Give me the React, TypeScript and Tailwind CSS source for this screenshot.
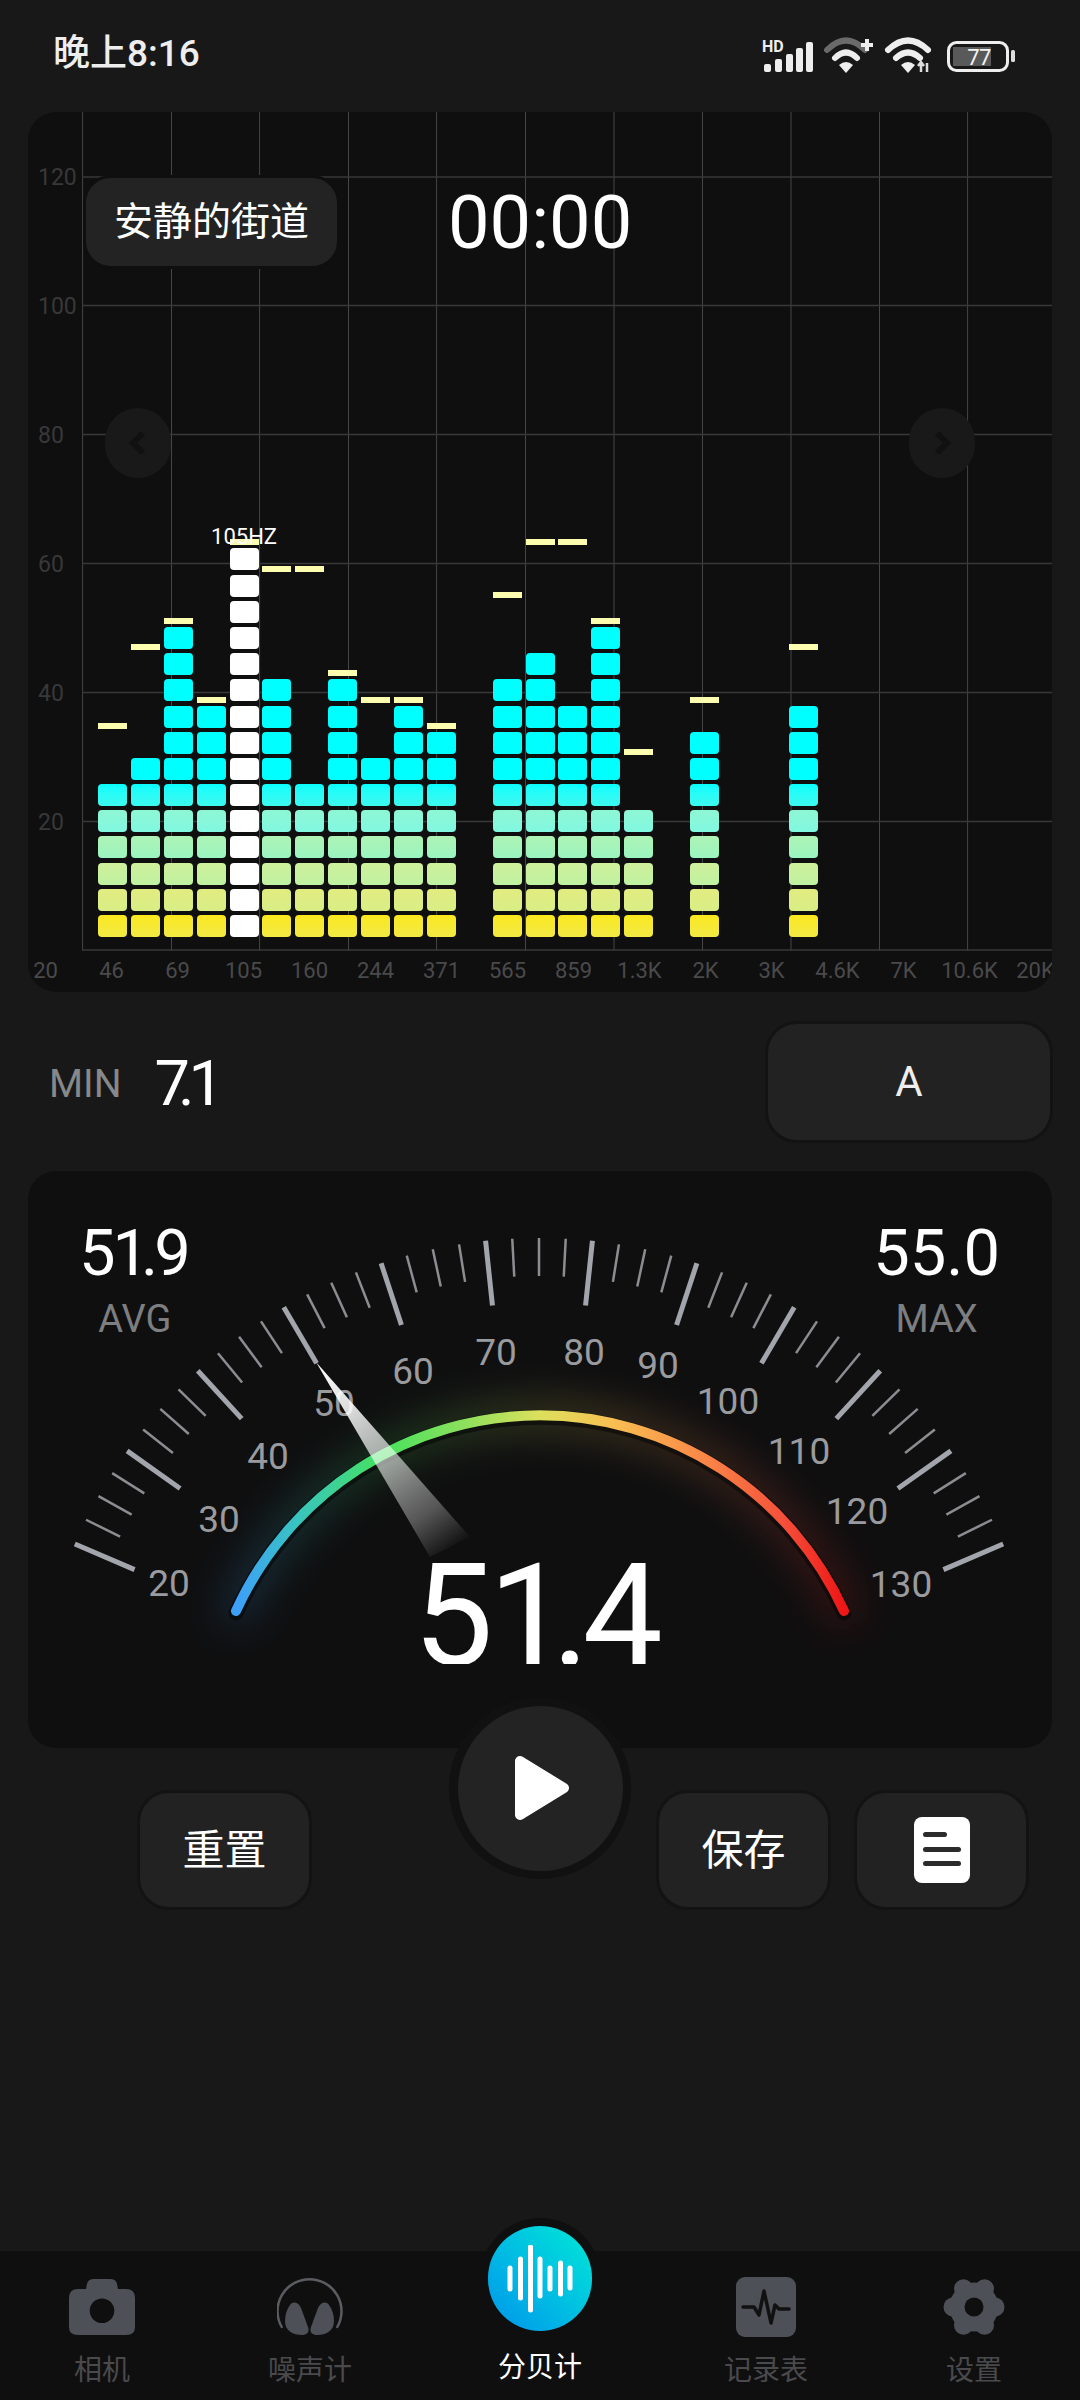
import React from "react";

const FONT = "font-['Roboto','Noto_Sans_CJK_SC',sans-serif]";

const ROW_CLASSES = [
  "bg-linear-to-b from-[#fbe91a] to-[#f2e944]",
  "bg-linear-to-b from-[#e2ec80] to-[#d8ee86]",
  "bg-linear-to-b from-[#cff09a] to-[#bff2a2]",
  "bg-linear-to-b from-[#aef3b4] to-[#9af5c0]",
  "bg-linear-to-b from-[#8ef7d4] to-[#80f8e0]",
  "bg-linear-to-b from-[#04fefe] to-[#3cf9ee]",
  "bg-[#00ffff]",
];

const bars: { n: number; peak: number | null; white?: boolean }[] = [
  { n: 6, peak: 726 },
  { n: 7, peak: 647 },
  { n: 12, peak: 621 },
  { n: 9, peak: 700 },
  { n: 15, peak: 542, white: true },
  { n: 10, peak: 569 },
  { n: 6, peak: 569 },
  { n: 10, peak: 673 },
  { n: 7, peak: 700 },
  { n: 9, peak: 700 },
  { n: 8, peak: 726 },
  { n: 0, peak: null },
  { n: 10, peak: 595 },
  { n: 11, peak: 542 },
  { n: 9, peak: 542 },
  { n: 12, peak: 621 },
  { n: 5, peak: 752 },
  { n: 0, peak: null },
  { n: 8, peak: 700 },
  { n: 0, peak: null },
  { n: 0, peak: null },
  { n: 9, peak: 647 },
];

const xLabels = ["20", "46", "69", "105", "160", "244", "371", "565", "859", "1.3K", "2K", "3K", "4.6K", "7K", "10.6K", "20K"];

function StatusIcons() {
  return (
    <svg width="262" height="42" viewBox="755 34 262 42" className="shrink-0">
      <text x="762" y="51" fontFamily="Roboto" fontWeight="700" fontSize="16" fill="#eee">HD</text>
      <g fill="#eee">
        <rect x="764" y="63" width="7" height="8" rx="2" />
        <rect x="775" y="58" width="7" height="13" rx="2" />
        <rect x="786" y="53" width="7" height="18" rx="2" />
        <rect x="796" y="47" width="7" height="24" rx="2" />
        <rect x="806" y="41" width="7" height="30" rx="2" />
      </g>
      <g fill="none" strokeLinecap="round" strokeWidth="6">
        <path d="M827 49 Q846 30 865 49" stroke="#6a6a6a" />
        <path d="M835 57 Q846 46 857 57" stroke="#eee" />
      </g>
      <path d="M839 64 Q846 58 853 64 L846 72 Z" fill="#eee" />
      <path d="M861 44 H873 M867 38 V50" stroke="#eee" strokeWidth="4" />
      <g fill="none" strokeLinecap="round" strokeWidth="6" stroke="#eee">
        <path d="M888 49 Q908 30 928 49" />
        <path d="M896 57 Q908 46 920 57" />
      </g>
      <path d="M901 64 Q908 58 915 64 L908 72 Z" fill="#eee" />
      <path d="M921 62 V71 M918 65 L921 61 L924 65 M927 62 V71" stroke="#ddd" strokeWidth="2.5" fill="none" />
      <rect x="948.5" y="41.5" width="59" height="28" rx="8" fill="none" stroke="#eee" strokeWidth="3" />
      <rect x="953" y="46" width="38" height="19" fill="#595959" />
      <text x="979" y="63.5" textAnchor="middle" fontFamily="Roboto" fontSize="22" fill="#f2f2f2" style={{ letterSpacing: "-0.5px" }}>77</text>
      <rect x="1011" y="49" width="4" height="12" rx="1.5" fill="#ddd" />
    </svg>
  );
}

function ChartGrid() {
  const vs = [82.6, 171.5, 259.6, 348.5, 436.6, 525.5, 614, 702.5, 791, 879.5, 967.6];
  const hs: [number, string][] = [[177, "120"], [305.5, "100"], [434.5, "80"], [563.5, "60"], [692.5, "40"], [821.5, "20"]];
  return (
    <svg className="absolute inset-0 w-full h-full" viewBox="28 112 1024 839">
      {vs.map((x) => (
        <line key={x} x1={x} x2={x} y1="112" y2="951" stroke="#464647" strokeWidth="1" />
      ))}
      {hs.map(([y, t]) => (
        <g key={t}>
          <line x1="82" x2="1052" y1={y} y2={y} stroke="#383839" strokeWidth="1.5" />
          <text x="38" y={y + 8} fontFamily="Roboto" fontSize="23" fill="#383839">{t}</text>
        </g>
      ))}
      <line x1="82" x2="1052" y1="950" y2="950" stroke="#383839" strokeWidth="1.5" />
    </svg>
  );
}

function ChartPanel() {
  return (
    <div className="relative mx-[28px] h-[880px] rounded-[28px] bg-[#0f0f10] overflow-hidden flex flex-col shrink-0">
      <div className="relative h-[839px] shrink-0">
        <ChartGrid />
        <div className="relative flex h-full gap-[3.9px] pl-[70px]">
          {bars.map((b, i) => (
            <div key={i} className="relative w-[29px] h-full flex flex-col-reverse gap-[4.2px] pb-[14px]">
              {Array.from({ length: b.n }).map((_, r) => (
                <div
                  key={r}
                  className={`h-[22px] rounded-[4px] shrink-0 ${b.white ? "bg-white" : ROW_CLASSES[Math.min(r, 6)]}`}
                />
              ))}
              {b.peak !== null && (
                <div className="absolute left-0 w-[29px] h-[6px] bg-[#fdfdb0]" style={{ top: b.peak - 112 - 3 }} />
              )}
              {b.white && (
                <div className="absolute top-[414px] left-1/2 -translate-x-1/2 text-[22px] leading-[22px] text-white whitespace-nowrap">
                  105HZ
                </div>
              )}
            </div>
          ))}
        </div>
        <div className="absolute left-[55px] top-[63px] w-[257px] h-[94px] rounded-[28px] border-[3px] border-[#0f0f10] bg-[#232323] flex items-center justify-center text-white text-[39px]">
          安静的街道
        </div>
        <div className="absolute left-[420px] top-[66px] text-[74px] leading-[90px] font-normal text-white">00:00</div>
        <div className="absolute left-[77px] top-[296px] w-[66px] h-[70px] rounded-full bg-[#191919] flex items-center justify-center">
          <svg width="24" height="30" viewBox="0 0 24 30"><path d="M17 5 L7 15 L17 25" fill="none" stroke="#111112" strokeWidth="6" /></svg>
        </div>
        <div className="absolute left-[881px] top-[296px] w-[66px] h-[70px] rounded-full bg-[#191919] flex items-center justify-center">
          <svg width="24" height="30" viewBox="0 0 24 30"><path d="M7 5 L17 15 L7 25" fill="none" stroke="#111112" strokeWidth="6" /></svg>
        </div>
      </div>
      <div className="flex -ml-[15.5px] shrink-0">
        {xLabels.map((t) => (
          <div key={t} className="w-[66px] h-[38px] shrink-0 flex items-center justify-center text-[22px] text-[#4a4a4b] whitespace-nowrap">
            {t}
          </div>
        ))}
      </div>
    </div>
  );
}

function MinRow() {
  return (
    <div className="h-[179px] shrink-0 flex items-center pl-[49px] pr-[27px]">
      <span className="mt-[4px] text-[39px] leading-[48px] text-[#86888a]">MIN</span>
      <span className="ml-[33px] mt-[4px] text-[63px] leading-[70px] text-white flex">
        <span>7</span>
        <span className="-ml-[12px]">.</span>
        <span className="-ml-[6px]">1</span>
      </span>
      <div className="ml-auto w-[288px] h-[122px] rounded-[32px] bg-[#222223] border-[3px] border-[#131313] flex items-center justify-center text-[42px] text-[#eee]">
        A
      </div>
    </div>
  );
}

function Gauge() {
  const cx = 539;
  const cy = 1743;
  const ticks = Array.from({ length: 45 }).map((_, i) => {
    const a = ((23.2 + (i * 133.6) / 44) * Math.PI) / 180;
    const major = i % 4 === 0;
    const ri = major ? 440 : 467;
    const ro = 505;
    return {
      i,
      major,
      x1: cx - ro * Math.cos(a),
      y1: cy - ro * Math.sin(a),
      x2: cx - ri * Math.cos(a),
      y2: cy - ri * Math.sin(a),
    };
  });
  const labels: [string, number, number][] = [
    ["20", 169, 1583], ["30", 219, 1519], ["40", 268, 1456], ["50", 334, 1403], ["60", 413, 1371], ["70", 496, 1352],
    ["80", 584, 1352], ["90", 658, 1365], ["100", 728, 1401], ["110", 799, 1451], ["120", 857, 1511], ["130", 901, 1584],
  ];
  const arc = "M236 1611 A334 334 0 0 1 844 1611";
  return (
    <svg className="absolute inset-0 w-full h-full" viewBox="28 1171 1024 577">
      <defs>
        <linearGradient id="arcG" gradientUnits="userSpaceOnUse" x1="236" y1="0" x2="844" y2="0">
          <stop offset="0" stopColor="#3d9ffa" />
          <stop offset="0.1" stopColor="#38c4c0" />
          <stop offset="0.24" stopColor="#45e25e" />
          <stop offset="0.38" stopColor="#90e05c" />
          <stop offset="0.5" stopColor="#dde05c" />
          <stop offset="0.62" stopColor="#f8bf52" />
          <stop offset="0.76" stopColor="#fa8a48" />
          <stop offset="0.9" stopColor="#f5503a" />
          <stop offset="1" stopColor="#ee1616" />
        </linearGradient>
        <linearGradient id="needleG" gradientUnits="userSpaceOnUse" x1="316" y1="1362" x2="452" y2="1552">
          <stop offset="0" stopColor="#fff" stopOpacity="1" />
          <stop offset="0.25" stopColor="#fff" stopOpacity="0.85" />
          <stop offset="0.5" stopColor="#fff" stopOpacity="0.6" />
          <stop offset="0.8" stopColor="#fff" stopOpacity="0.3" />
          <stop offset="1" stopColor="#fff" stopOpacity="0" />
        </linearGradient>
        <filter id="glow" x="-20%" y="-30%" width="140%" height="170%">
          <feGaussianBlur stdDeviation="20" />
        </filter>
        <clipPath id="bigClip">
          <rect x="380" y="1500" width="320" height="164" />
        </clipPath>
      </defs>
      {ticks.map((t) => (
        <line
          key={t.i}
          x1={t.x1}
          y1={t.y1}
          x2={t.x2}
          y2={t.y2}
          stroke={t.major ? "#a2a5ab" : "#8b8d91"}
          strokeWidth={t.major ? 5 : 2.5}
        />
      ))}
      {labels.map(([t, x, y]) => (
        <text key={t} x={x} y={y + 13} textAnchor="middle" fontFamily="Roboto" fontSize="37" fill="#9a9b9e">{t}</text>
      ))}
      <path d={arc} fill="none" stroke="url(#arcG)" strokeWidth="28" strokeLinecap="round" opacity="0.22" filter="url(#glow)" />
      <path d={arc} fill="none" stroke="#070707" strokeWidth="15" strokeLinecap="round" opacity="0.6" transform="translate(0 2)" />
      <path d={arc} fill="none" stroke="url(#arcG)" strokeWidth="10" strokeLinecap="round" />
      <polygon points="316,1362 430,1557 470,1537" fill="url(#needleG)" />
      <text x="413" y="1665" clipPath="url(#bigClip)" fontFamily="Roboto" fontSize="143" fill="#fff">
        5<tspan dx="-5">1</tspan><tspan dx="-17">.</tspan><tspan dx="-7">4</tspan>
      </text>
    </svg>
  );
}

function GaugePanel() {
  return (
    <div className="relative mx-[28px] h-[577px] shrink-0 rounded-[28px] bg-[#0f0f10] overflow-hidden">
      <Gauge />
      <div className="relative flex justify-between pl-[51px] pr-[52px] pt-[50px]">
        <div className="flex flex-col items-center">
          <div className="text-[65px] leading-[64px] text-white flex">
            <span>5</span>
            <span className="-ml-[3px]">1</span>
            <span className="-ml-[8px]">.</span>
            <span className="-ml-[4px]">9</span>
          </div>
          <div className="mt-[15px] text-[38px] leading-[38px] text-[#7d7e80]">AVG</div>
        </div>
        <div className="flex flex-col items-center">
          <div className="text-[65px] leading-[64px] text-white">55.0</div>
          <div className="mt-[15px] text-[38px] leading-[38px] text-[#7d7e80]">MAX</div>
        </div>
      </div>
    </div>
  );
}

function Buttons() {
  const btn = "w-[175px] h-[120px] rounded-[32px] bg-[#222223] border-[3px] border-[#131313] flex items-center justify-center text-white text-[42px] shrink-0";
  return (
    <div className="relative h-[160px] shrink-0 pt-[42px] pl-[137px] pr-[51px] flex items-start">
      <div className={btn}>重置</div>
      <div className={`${btn} ml-auto`}>保存</div>
      <div className={`${btn} ml-[23px]`}>
        <svg width="56" height="66" viewBox="0 0 56 66">
          <rect width="56" height="66" rx="8" fill="#fff" />
          <rect x="9" y="15" width="24" height="5" rx="2.5" fill="#2b2b2b" />
          <rect x="9" y="30" width="38" height="5" rx="2.5" fill="#2b2b2b" />
          <rect x="9" y="44" width="38" height="5" rx="2.5" fill="#2b2b2b" />
        </svg>
      </div>
      <div className="absolute left-[449px] -top-[51px] w-[182px] h-[182px] rounded-full bg-[#111112] flex items-center justify-center">
        <div className="w-[165px] h-[165px] rounded-full bg-[#232323] flex items-center justify-center">
          <svg width="60" height="68" viewBox="0 0 60 68" className="ml-[4px]">
            <path d="M8 7 L52 34 L8 61 Z" fill="#fff" stroke="#fff" strokeWidth="10" strokeLinejoin="round" />
          </svg>
        </div>
      </div>
    </div>
  );
}

const ICON = "#4d5057";
const navItems = [
  {
    label: "相机",
    icon: (
      <svg width="66" height="56" viewBox="0 0 66 56">
        <path fillRule="evenodd" fill={ICON} d="M25 0 H41 Q47 0 48 5 L49 10 H57 Q66 10 66 19 V48 Q66 56 57 56 H9 Q0 56 0 48 V19 Q0 10 9 10 H17 L18 5 Q19 0 25 0 Z M33 19.5 A12.3 12.3 0 1 0 33 44.1 A12.3 12.3 0 1 0 33 19.5 Z" />
      </svg>
    ),
  },
  {
    label: "噪声计",
    icon: (
      <svg width="66" height="60" viewBox="0 0 66 60">
        <path d="M4.7 50 A32 32 0 1 1 60.3 50" fill="none" stroke="#5a5c60" strokeWidth="2.5" strokeLinecap="round" />
        <path d="M13 28 C16 24 21 25 24 31 L31 50 C33 56 29 58 25 58 C16 58 8 54 8 44 C8 38 10 32 13 28 Z" fill={ICON} />
        <path d="M13 28 C16 24 21 25 24 31 L31 50 C33 56 29 58 25 58 C16 58 8 54 8 44 C8 38 10 32 13 28 Z" fill={ICON} transform="translate(65 0) scale(-1 1)" />
      </svg>
    ),
  },
  { label: "分贝计", icon: null, active: true },
  {
    label: "记录表",
    icon: (
      <svg width="60" height="60" viewBox="0 0 60 60">
        <rect width="60" height="60" rx="9" fill={ICON} />
        <path d="M7 30 H18 L23 38 L28 14 L35 46 L39 28 L43 32 H53" fill="none" stroke="#111" strokeWidth="3.5" strokeLinejoin="round" strokeLinecap="round" />
      </svg>
    ),
  },
  {
    label: "设置",
    icon: (
      <svg width="62" height="60" viewBox="0 0 62 60">
        <circle cx="31" cy="30" r="24.5" fill={ICON} />
        {[30, 90, 150, 210, 270, 330].map((a) => (
          <circle key={a} cx={31 + 21 * Math.sin((a * Math.PI) / 180)} cy={30 - 21 * Math.cos((a * Math.PI) / 180)} r="9.5" fill={ICON} />
        ))}
        <circle cx="31" cy="30" r="9.5" fill="#0f0f10" />
      </svg>
    ),
  },
];

function Nav() {
  const wave: [number, number, number][] = [
    [510, 2267, 2288], [520.5, 2258, 2297], [530.5, 2246, 2309], [540, 2258, 2295], [550, 2267, 2288], [560.5, 2262, 2293], [570, 2267, 2287],
  ];
  return (
    <div className="relative mt-auto h-[149px] shrink-0 bg-[#0f0f10] grid grid-cols-[204px_212px_248px_204px_212px]">
      {navItems.map((n) => (
        <div key={n.label} className="relative flex flex-col items-center">
          {n.active ? (
            <>
              <div className="absolute -top-[33px] w-[121px] h-[121px] rounded-full bg-[#0f0f10] flex items-center justify-center">
                <div className="w-[104px] h-[105px] rounded-full bg-linear-to-tr from-[#0a94ea] to-[#03e8d6] flex items-center justify-center">
                  <svg width="70" height="68" viewBox="505 2244 70 68">
                    {wave.map(([x, a, b]) => (
                      <line key={x} x1={x} x2={x} y1={a} y2={b} stroke="#fff" strokeWidth="5" strokeLinecap="round" />
                    ))}
                  </svg>
                </div>
              </div>
              <span className="absolute top-[98px] text-[28px] leading-[38px] text-white">{n.label}</span>
            </>
          ) : (
            <>
              <div className="h-[60px] mt-[26px] flex items-center">{n.icon}</div>
              <span className="absolute top-[101px] text-[28px] leading-[38px] text-[#4a4a4c]">{n.label}</span>
            </>
          )}
        </div>
      ))}
    </div>
  );
}

export default function App() {
  return (
    <div className={`w-[1080px] h-[2400px] bg-[#181818] overflow-hidden flex flex-col ${FONT}`}>
      <div className="h-[112px] shrink-0 flex items-start justify-between pl-[53px] pr-[63px] pt-[35px]">
        <span className="text-[37px] leading-[37px] font-medium text-[#eeeeee]">晚上8:16</span>
        <StatusIcons />
      </div>
      <ChartPanel />
      <MinRow />
      <GaugePanel />
      <Buttons />
      <Nav />
    </div>
  );
}
